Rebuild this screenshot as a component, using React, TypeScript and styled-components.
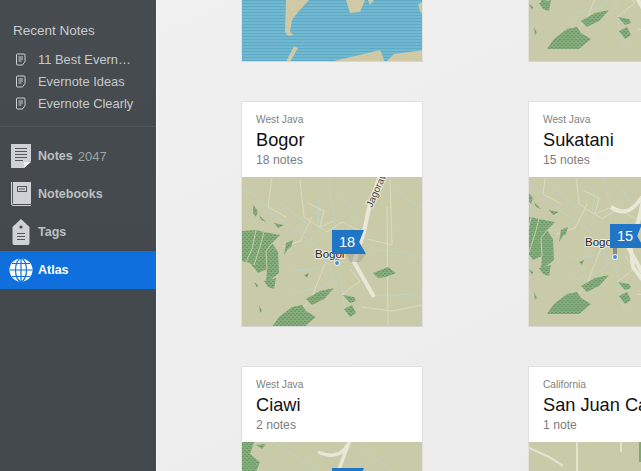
import React from "react";
import styled, { createGlobalStyle } from "styled-components";

const GlobalStyle = createGlobalStyle`
  html, body {
    margin: 0;
    height: 100%;
    overflow: hidden;
    font-family: "Liberation Sans", Arial, sans-serif;
    -webkit-font-smoothing: antialiased;
  }
  #root { height: 100%; }
`;

const Page = styled.div`
  display: flex;
  width: 641px;
  height: 471px;
  overflow: hidden;
  background: linear-gradient(155deg, #f1f1f2 0%, #eeeeef 45%, #ececed 100%);
`;

// sidebar
const Sidebar = styled.aside`
  flex: 0 0 157px;
  width: 157px;
  height: 471px;
  box-sizing: border-box;
  padding-top: 23px;
  background: linear-gradient(180deg, #464c50 0%, #43494d 50%, #42484c 100%);
  border-right: 1px solid #f7f7f7;
`;

const SectionTitle = styled.div`
  padding-left: 13px;
  font-size: 13.5px;
  line-height: 15px;
  color: #c9cdcf;
`;

const RecentList = styled.div`
  display: flex;
  flex-direction: column;
  gap: 4px;
  margin-top: 12px;
  padding: 0 0 14px 16px;
  border-bottom: 1px solid #50565a;
`;

const RecentRow = styled.div`
  display: flex;
  align-items: center;
  gap: 12px;
  height: 18px;
`;

const RecentLabel = styled.span`
  width: 96px;
  overflow: hidden;
  white-space: nowrap;
  text-overflow: ellipsis;
  font-size: 12.9px;
  color: #c6cacc;
`;

const NavList = styled.nav`
  margin-top: 10px;
`;

const NavRow = styled.div<{ $active?: boolean }>`
  display: flex;
  align-items: center;
  height: 38px;
  box-sizing: border-box;
  padding-left: 9px;
  gap: 5px;
  background: ${(p) => (p.$active ? "#0f6fdc" : "transparent")};
  color: ${(p) => (p.$active ? "#ffffff" : "#bcc0c3")};
  font-size: 12.5px;
  font-weight: bold;
`;

const NavIcon = styled.span`
  display: flex;
  justify-content: center;
  width: 24px;
`;

const NavCount = styled.span`
  font-weight: normal;
  font-size: 13px;
  color: #9ea3a6;
`;

// cards
const Main = styled.main`
  flex: 1;
  min-width: 0;
  height: 471px;
  overflow: hidden;
  padding-left: 84px;
`;

const CardGrid = styled.div`
  display: grid;
  grid-template-columns: 182px 182px;
  column-gap: 105px;
  row-gap: 39px;
  margin-top: -164px;
`;

const Card = styled.article`
  width: 182px;
  height: 226px;
  box-sizing: border-box;
  border: 1px solid #e0e0e0;
  border-bottom-color: #d6d6d6;
  background: #fff;
  display: flex;
  flex-direction: column;
`;

const CardHead = styled.header`
  flex: 0 0 75px;
  box-sizing: border-box;
  padding: 12px 0 0 14px;
  white-space: nowrap;
`;

const Region = styled.div`
  font-size: 10.2px;
  line-height: 12px;
  color: #7f7f7f;
`;

const City = styled.div`
  margin-top: 3px;
  font-size: 18.2px;
  line-height: 23px;
  color: #111;
`;

const Count = styled.div`
  margin-top: 1px;
  font-size: 12.2px;
  line-height: 15px;
  color: #7d7d7d;
`;

const MapBox = styled.div`
  position: relative;
  flex: 1;
  overflow: hidden;
  background: #c9cba8;

  svg {
    display: block;
  }
`;

const Flag = styled.div<{ $x: number; $y: number }>`
  position: absolute;
  left: ${(p) => p.$x}px;
  top: ${(p) => p.$y}px;
  width: 34px;
  height: 24px;
  box-sizing: border-box;
  padding-left: 7px;
  background: #2075c6;
  clip-path: polygon(0 0, 94% 0, 80% 50%, 100% 100%, 0 100%);
  color: #fff;
  font-size: 14.5px;
  line-height: 24px;
`;

const green = "url(#forest)";

// same patch of Java is used by every West Java card, moved a bit
const JavaTerrain = ({ dx = 0, dy = 0 }: { dx?: number; dy?: number }) => (
  <g transform={`translate(${dx} ${dy})`}>
    <g fill="none" stroke="#bdd3c8" strokeWidth="1">
      <path d="M0 12 C20 20 30 38 48 50 S78 68 88 90 S72 108 52 118" />
      <path d="M88 0 C84 20 98 40 92 62" />
      <path d="M128 70 C142 78 160 70 181 84" />
      <path d="M135 118 C150 122 165 112 181 122" />
      <path d="M38 26 C50 36 58 40 70 52" />
      <path d="M76 22 C80 34 72 44 78 56" />
      <path d="M52 92 C60 96 70 92 84 90" />
      <path d="M96 96 C104 110 98 126 108 146" />
      <path d="M150 14 C164 18 170 28 181 30" />
      <path d="M100 20 C110 28 112 40 120 44" />
    </g>
    <g fill="none" stroke="#dadbc2" strokeWidth="1">
      <path d="M58 3 L62 40 L85 55 L100 45 L122 56" />
      <path d="M70 40 L58 64 L40 70" />
      <path d="M84 84 L70 120 L44 150" />
      <path d="M125 62 L150 68 L148 0" />
      <path d="M145 30 L146 150" />
      <path d="M66 26 L82 34 L78 50 L92 44" />
      <path d="M108 92 L118 104 L100 118" />
      <path d="M30 0 L26 30 L44 40" />
      <path d="M120 130 L150 134 L181 128" />
    </g>
    <path d="M144 -20 L127 31 L122 55 L112 85 L132 120" fill="none" stroke="#e9e7d8" strokeWidth="4" strokeLinejoin="round" />
    <g fill={green}>
      <path d="M0 54 L14 53 L22 55 L38 58 L30 66 L36 75 L37 96 L32 100 L24 105 L25 92 L16 96 L13 92 L8 86 L4 85 L0 84 Z" />
      <path d="M11 28 L16 34 L14 40 L11 36 Z" />
      <path d="M17 38 L24 45 L19 43 Z" />
      <path d="M32 46 L42 48 L36 51 Z" />
      <path d="M42 78 L44 66 L51 63 L49 70 L46 72 Z" />
      <path d="M62 98 L67 96 L65 101 Z" />
      <path d="M12 105 L16 108 L15 111 Z" />
      <path d="M22 104 L34 101 L32 112 L26 110 Z" />
      <path d="M17 128 L20 134 L18 136 Z" />
      <path d="M37 140 L50 130 L60 128 L64 134 L74 140 L62 150 L30 150 Z" />
      <path d="M64 122 L78 114 L92 111 L82 122 L70 128 Z" />
      <path d="M101 118 L112 120 L114 124 L108 126 Z" />
      <path d="M102 132 L110 128 L114 136 L108 140 Z" />
      <path d="M131 96 L146 90 L154 96 L144 100 L136 101 Z" />
    </g>
    <g fill="none" stroke="#c9cba8" strokeWidth="1">
      <path d="M14 53 L10 72 L4 85" />
      <path d="M22 55 L18 70 L12 88" />
      <path d="M30 66 L24 74 L25 92" />
    </g>
  </g>
);

const Bogor = ({ x, y, pinX, pinY }: { x: number; y: number; pinX: number; pinY: number }) => (
  <>
    <path d={`M${pinX - 2} ${pinY - 9} h4 v9 h-4 z`} fill="#8d8d86" />
    <circle cx={pinX} cy={pinY} r="3" fill="#e8eef2" />
    <circle cx={pinX} cy={pinY} r="2" fill="#4e8fc9" />
    <text x={x} y={y} fontSize="11.5" fill="#222" stroke="#eeeee2" strokeWidth="2" paintOrder="stroke" fontFamily="Liberation Sans">
      Bogor
    </text>
  </>
);

const MapArt = ({ height = 150, children }: { height?: number; children: React.ReactNode }) => (
  <svg width="180" height={height} viewBox={`0 0 180 ${height}`}>
    {children}
  </svg>
);

const Sea = () => (
  <MapArt>
    <rect width="180" height="150" fill="url(#water)" />
    <g fill="#cfc9a5">
      <path d="M44 88 L67 88 L56 100 L50 108 L48 120 L52 123 L46 124 L43 120 Z" />
      <path d="M104 88 L123 88 L118 100 L108 101 Z" />
      <path d="M126 88 L132 88 L128 93 Z" />
      <path d="M176 92 L181 90 L181 102 L178 100 Z" />
      <path d="M88 150 L130 140 L138 138 L143 150 Z" />
      <path d="M144 150 L152 142 L181 138 L181 150 Z" />
      <path d="M44 150 L52 134 L56 136 L48 150 Z" />
    </g>
  </MapArt>
);

const SanJuanArt = () => (
  <MapArt>
    <g fill="none" stroke="#e4e3d0" strokeWidth="2">
      <path d="M0 6 C14 12 20 14 34 24" />
      <path d="M48 0 V40" />
      <path d="M92 0 V10" />
    </g>
    <rect x="110" y="0" width="3" height="20" fill="#7fa872" />
  </MapArt>
);

// flat icons
const NoteSmall = () => (
  <svg width="10" height="13" viewBox="0 0 10 13" fill="none" stroke="#ccd0d3" strokeWidth="1">
    <path d="M1.5 1 H8 Q9 1 9 2 V8.5 L6.5 12 H1.5 Q.5 12 .5 11 V2 Q.5 1 1.5 1 Z" />
    <path d="M2.5 4 H7 M2.5 6 H7 M2.5 8 H5.5" />
  </svg>
);

const NotesIcon = () => (
  <svg width="20" height="24" viewBox="0 0 20 24">
    <path d="M0 0 H20 V17 L13 24 H0 Z" fill="#ced2d7" />
    <path d="M13 24 V18 H20 Z" fill="#eceef0" />
    <path d="M4 4.5 H16 M4 7.5 H16 M4 10.5 H16 M4 13.5 H16 M4 16.5 H12" stroke="#53585c" strokeWidth="1" />
  </svg>
);

const NotebookIcon = () => (
  <svg width="20" height="24" viewBox="0 0 20 24">
    <rect x="1" y="0" width="19" height="22" fill="#ced2d7" />
    <path d="M.5 0 V22 Q.5 23.5 2 23.5 H20" fill="none" stroke="#ced2d7" strokeWidth="1" />
    <path d="M1.5 0 V21.5" stroke="#53585c" strokeWidth="1" />
    <rect x="6.5" y="4.5" width="9" height="5" fill="none" stroke="#53585c" strokeWidth="1" />
    <path d="M8 7 H14" stroke="#53585c" strokeWidth="1" />
  </svg>
);

const TagIcon = () => (
  <svg width="18" height="26" viewBox="0 0 18 26">
    <path d="M9 0 L17.5 8 V24 Q17.5 26 16 26 H2 Q.5 26 .5 24 V8 Z" fill="#ced2d7" />
    <circle cx="9" cy="8" r="1.6" fill="#45494d" />
    <path d="M5 14.5 H13 M5 17.5 H13 M5 20.5 H13" stroke="#53585c" strokeWidth="1" />
  </svg>
);

const GlobeIcon = () => (
  <svg width="24" height="24" viewBox="0 0 24 24">
    <circle cx="12" cy="12" r="11.5" fill="#fff" />
    <g fill="none" stroke="#0f6fdc" strokeWidth="1.2">
      <ellipse cx="12" cy="12" rx="5.5" ry="11.5" />
      <path d="M12 0 V24 M1 12 H23 M3 5.5 H21 M3 18.5 H21" />
    </g>
  </svg>
);

const recentNotes = ["11 Best Evernote Tips", "Evernote Ideas", "Evernote Clearly"];

export default function App() {
  return (
    <Page>
      <GlobalStyle />
      <svg width="0" height="0" style={{ position: "absolute" }}>
        <defs>
          <pattern id="forest" width="4" height="4" patternUnits="userSpaceOnUse">
            <rect width="4" height="4" fill="#86ad7c" />
            <path d="M0 3 L1 1.5 L2 3 M2 1 L3 0 L4 1" fill="none" stroke="#5f8c5d" strokeWidth=".7" />
          </pattern>
          <pattern id="water" width="4" height="3" patternUnits="userSpaceOnUse">
            <rect width="4" height="3" fill="#70b9d1" />
            <path d="M0 2.2 L1 1 L2 2.2 L3 1 L4 2.2" fill="none" stroke="#5ca7c5" strokeWidth=".9" />
          </pattern>
        </defs>
      </svg>

      <Sidebar>
        <SectionTitle>Recent Notes</SectionTitle>
        <RecentList>
          {recentNotes.map((note) => (
            <RecentRow key={note}>
              <NoteSmall />
              <RecentLabel>{note}</RecentLabel>
            </RecentRow>
          ))}
        </RecentList>
        <NavList>
          <NavRow>
            <NavIcon><NotesIcon /></NavIcon>
            Notes <NavCount>2047</NavCount>
          </NavRow>
          <NavRow>
            <NavIcon><NotebookIcon /></NavIcon>
            Notebooks
          </NavRow>
          <NavRow>
            <NavIcon><TagIcon /></NavIcon>
            Tags
          </NavRow>
          <NavRow $active>
            <NavIcon><GlobeIcon /></NavIcon>
            Atlas
          </NavRow>
        </NavList>
      </Sidebar>

      <Main>
        <CardGrid>
          <Card>
            <CardHead />
            <MapBox><Sea /></MapBox>
          </Card>
          <Card>
            <CardHead />
            <MapBox>
              <MapArt>
                <JavaTerrain dx={-12} dy={-13} />
              </MapArt>
            </MapBox>
          </Card>

          <Card>
            <CardHead>
              <Region>West Java</Region>
              <City>Bogor</City>
              <Count>18 notes</Count>
            </CardHead>
            <MapBox>
              <MapArt>
                <JavaTerrain />
                <path d="M104 77 h20 l-6 8 h-10 z" fill="#8a8a80" opacity=".35" />
                <text transform="translate(130 31) rotate(-66)" fontSize="10" fill="#444" stroke="#eeeee2" strokeWidth="2" paintOrder="stroke" fontFamily="Liberation Sans">
                  Jagorawi
                </text>
                <Bogor x={73} y={81} pinX={95} pinY={86} />
              </MapArt>
              <Flag $x={90} $y={53}>18</Flag>
            </MapBox>
          </Card>
          <Card>
            <CardHead>
              <Region>West Java</Region>
              <City>Sukatani</City>
              <Count>15 notes</Count>
            </CardHead>
            <MapBox>
              <MapArt>
                <JavaTerrain dx={-12} dy={-13} />
                <path d="M82 30 C96 40 105 32 113 20 M100 56 L104 90 L116 106" fill="none" stroke="#e9e7d8" strokeWidth="4" />
                <Bogor x={56} y={69} pinX={86} pinY={80} />
              </MapArt>
              <Flag $x={81} $y={47}>15</Flag>
            </MapBox>
          </Card>

          <Card>
            <CardHead>
              <Region>West Java</Region>
              <City>Ciawi</City>
              <Count>2 notes</Count>
            </CardHead>
            <MapBox>
              <MapArt>
                <g fill="none" stroke="#bdd3c8" strokeWidth="1">
                  <path d="M30 0 C50 10 60 20 74 28" />
                  <path d="M120 0 C124 12 140 20 150 28" />
                </g>
                <path d="M108 -2 L96 30 M76 10 C90 16 100 14 106 2" fill="none" stroke="#e9e7d8" strokeWidth="3.5" />
                <g fill={green}>
                  <path d="M0 0 L12 0 L8 12 L18 20 L14 30 L0 30 Z" />
                  <path d="M14 3 L24 2 L20 7 Z" />
                </g>
              </MapArt>
              <Flag $x={90} $y={26} />
            </MapBox>
          </Card>
          <Card>
            <CardHead>
              <Region>California</Region>
              <City>San Juan Capistrano</City>
              <Count>1 note</Count>
            </CardHead>
            <MapBox><SanJuanArt /></MapBox>
          </Card>
        </CardGrid>
      </Main>
    </Page>
  );
}
